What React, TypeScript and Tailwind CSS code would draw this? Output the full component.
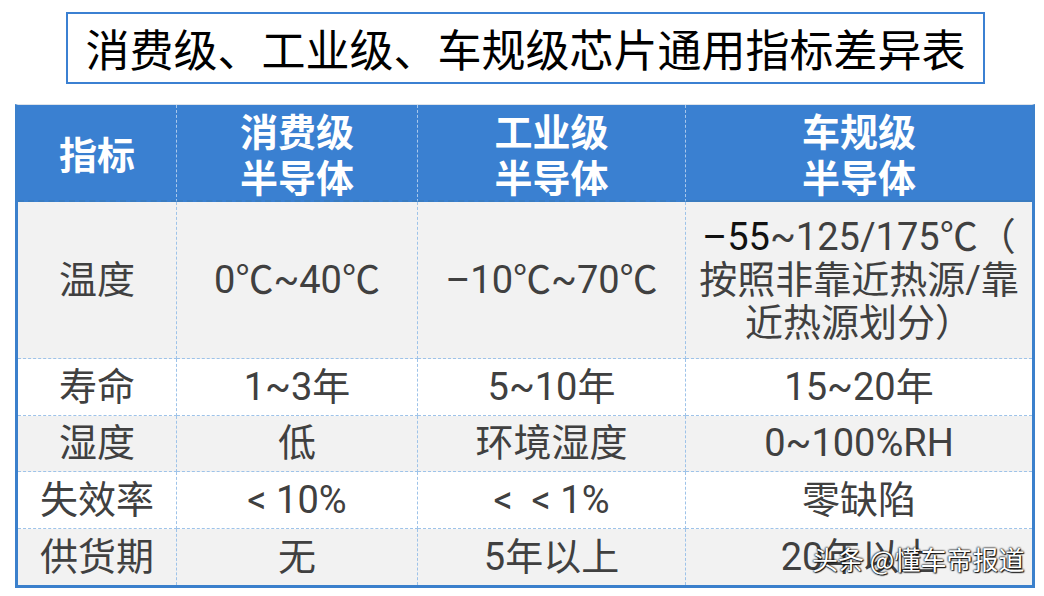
import React from "react";

const cols = ["指标", "消费级\n半导体", "工业级\n半导体", "车规级\n半导体"];

const rows: { label: string; cells: React.ReactNode[]; bg: string }[] = [
  {
    label: "温度",
    bg: "bg-[#f2f2f2]",
    cells: [
      "0℃~40℃",
      "–10℃~70℃",
      <>
        <span className="text-[#111]">–55</span>~125/175℃（
        <br />
        按照非靠近热源/靠
        <br />
        近热源划分）
      </>,
    ],
  },
  { label: "寿命", bg: "bg-white", cells: ["1~3年", "5~10年", "15~20年"] },
  { label: "湿度", bg: "bg-[#f2f2f2]", cells: ["低", "环境湿度", "0~100%RH"] },
  { label: "失效率", bg: "bg-white", cells: ["< 10%", "<  < 1%", "零缺陷"] },
  { label: "供货期", bg: "bg-[#f2f2f2]", cells: ["无", "5年以上", "20年以上"] },
];

export default function App() {
  return (
    <div className="relative w-[1044px] h-[596px] bg-white font-['Roboto','Noto_Sans_CJK_SC',sans-serif]">
      {/* Title */}
      <div className="pt-[12px] pl-[66px]">
        <div className="w-[919px] h-[72px] border-2 border-[#3b80d2] flex items-center justify-center">
          <h1 className="text-[44px] leading-none text-black font-normal font-['Noto_Sans_CJK_SC',sans-serif]">
            消费级、工业级、车规级芯片通用指标差异表
          </h1>
        </div>
      </div>

      {/* Table */}
      <div className="mt-[20px] ml-[15px] w-[1020px] border-t border-[#dde3ea] border-l-[3px] border-r-[3px] border-b-[3px] border-l-[#3b80cc] border-r-[#3b80cc] border-b-[#3b80cc] grid grid-cols-[159px_241px_268px_346px] grid-rows-[97px_157px_57px_56px_57px_56px] text-[38px] text-[#404040]">
        {cols.map((c, i) => (
          <div
            key={c}
            className={`bg-[#3a80d1] text-white font-bold leading-[46px] whitespace-pre-line flex items-center justify-center text-center border-b-2 border-b-[#3a7cc0] font-['Noto_Sans_CJK_SC',sans-serif] ${
              i < 3 ? "border-r border-dashed border-r-[#a9c8ec]" : ""
            }`}
          >
            {c}
          </div>
        ))}
        {rows.map((r, ri) =>
          [r.label, ...r.cells].map((cell, ci) => (
            <div
              key={`${ri}-${ci}`}
              className={`${r.bg} flex items-center justify-center text-center whitespace-pre leading-[43px] border-dashed border-[#9ec3e9] ${
                ci < 3 ? "border-r" : ""
              } ${ri < rows.length - 1 ? "border-b" : ""}`}
            >
              <div>{cell}</div>
            </div>
          ))
        )}
      </div>

      {/* Watermark */}
      <div className="absolute left-[812px] top-[546px] text-[26px] leading-none text-white font-['Noto_Sans_CJK_SC',sans-serif] [text-shadow:0_0_2px_#000,0_0_2px_#000,1px_1px_1px_#222]">
        头条 @懂车帝报道
      </div>
    </div>
  );
}
